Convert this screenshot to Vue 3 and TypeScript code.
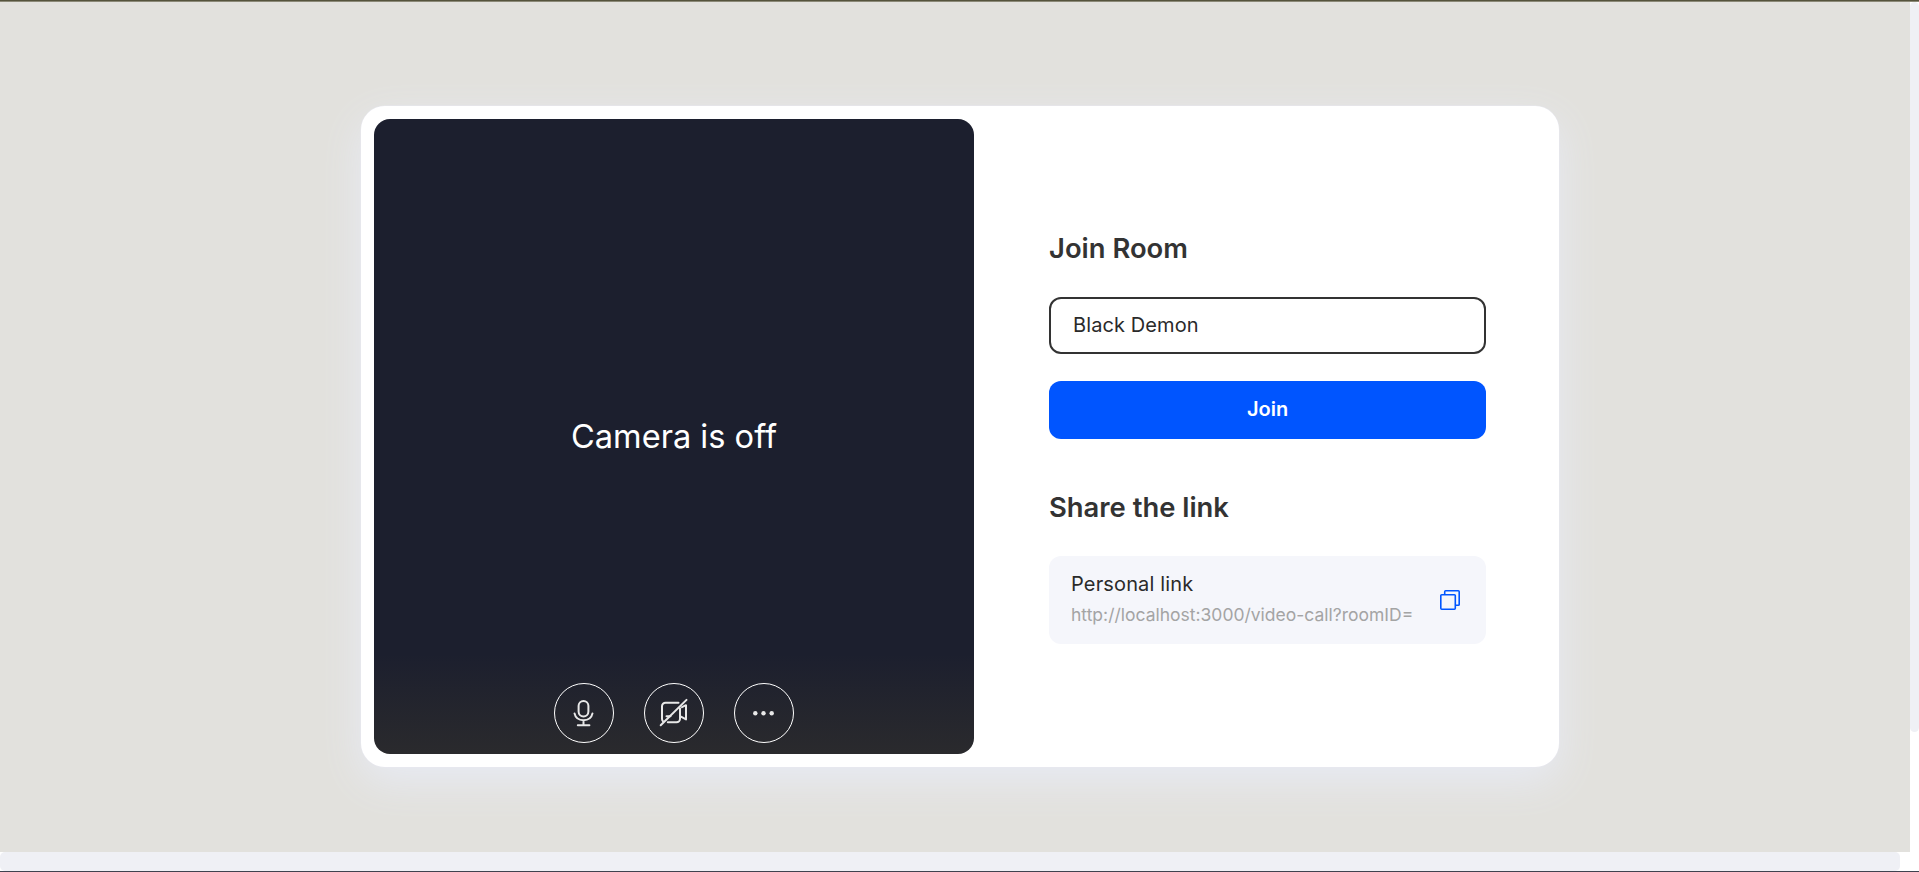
<script setup lang="ts">
import { ref } from 'vue'

const userName = ref('Black Demon')
const link = 'http://localhost:3000/video-call?roomID='
</script>

<template>
  <div class="window">
    <div class="top-line"></div>
    <div class="middle">
      <main class="page">
        <section class="card">
          <div class="preview">
            <p class="camera-text">Camera is off</p>
            <div class="controls">
              <button class="round" aria-label="Microphone">
                <svg width="30" height="30" viewBox="0 0 30 30">
                  <rect x="9.600" y="2.900" width="9.800" height="15.600" rx="4.900" />
                  <path d="M5.500 15.400c.9 4.300 4.600 6.800 9 6.800s8.100-2.500 9-6.800M14.500 22.200v5M8.800 27.200h11.600" />
                </svg>
              </button>
              <button class="round" aria-label="Camera">
                <svg width="30" height="30" viewBox="0 0 30 30">
                  <path d="M19.500 4.700H6.500A3.500 3.500 0 0 0 3 8.200v12.600a3.500 3.500 0 0 0 1 2.500M8.800 24.200h8.700a3.500 3.500 0 0 0 3.500-3.500V10.200M7.500 18.200h4M23 9.200l4-2v14.200l-5-2.800" />
                  <path d="M1.700 27.300L27.500 1.900" />
                </svg>
              </button>
              <button class="round" aria-label="More">
                <svg width="30" height="30" viewBox="0 0 30 30">
                  <g class="dots"><circle cx="6.300" cy="15.200" r="2.200" /><circle cx="14.500" cy="15.200" r="2.200" /><circle cx="22.700" cy="15.200" r="2.200" /></g>
                </svg>
              </button>
            </div>
          </div>
          <div class="form">
            <h2>Join Room</h2>
            <input v-model="userName" class="name" type="text" />
            <button class="join">Join</button>
            <h2 class="share-title">Share the link</h2>
            <div class="share">
              <div class="share-text">
                <div class="label">Personal link</div>
                <div class="url">{{ link }}</div>
              </div>
              <button class="copy" aria-label="Copy link">
                <svg width="20" height="20" viewBox="0 0 20 20">
                  <path d="M4.700 4V1.700a.9.900 0 0 1 .9-.9h12.700a.9.900 0 0 1 .9.900v12.700a.9.900 0 0 1-.9.900H16" />
                  <rect x=".8" y="4.700" width="14.500" height="14.500" rx=".9" />
                </svg>
              </button>
            </div>
          </div>
        </section>
      </main>
      <div class="vbar"><div class="vthumb"></div></div>
    </div>
    <div class="hbar"><div class="hthumb"></div></div>
    <div class="bottom-line"></div>
  </div>
</template>

<style>
body { margin: 0; overflow: hidden; }
</style>

<style scoped>
* { box-sizing: border-box; }
.window {
  display: flex;
  flex-direction: column;
  width: 1919px;
  height: 872px;
  background: #fff;
  font-family: Inter, "Liberation Sans", sans-serif;
}
.top-line { height: 2px; background: #55533c; border-bottom: 1px solid #8b8977; flex: none; }
.middle { display: flex; height: 850px; }
.page {
  width: 1910px;
  padding: 104px 0 0 361px;
  background: #e2e1dd;
}
.card {
  display: flex;
  width: 1198px;
  height: 661px;
  padding: 13px;
  border-radius: 24px;
  background: #fff;
  box-shadow: 0 0 0 .5px #e8e8ef, 0 14px 40px #e8ebf4;
}
.preview {
  display: flex;
  flex-direction: column;
  width: 600px;
  height: 635px;
  border-radius: 16px;
  background: linear-gradient(#1c1f2e 0, #1c1f2e 535px, #2a2a2d 635px);
}
.camera-text {
  margin: 296px 0 0;
  height: 42px;
  line-height: 42px;
  font-size: 32.6px;
  text-align: center;
  color: #fff;
}
.controls { display: flex; justify-content: center; gap: 30px; margin-top: 226px; }
.round {
  display: flex;
  align-items: center;
  justify-content: center;
  width: 60px;
  height: 60px;
  padding: 0;
  border: 1px solid #fff;
  border-radius: 50%;
  background: transparent;
}
svg { display: block; fill: none; stroke: #e8e8e8; stroke-width: 2; stroke-linecap: round; stroke-linejoin: round; }
.dots { fill: #e8e8e8; stroke: none; }
.form { width: 437px; margin-left: 75px; padding-top: 112px; }
h2 {
  margin: 0;
  height: 34px;
  line-height: 34px;
  font-size: 27.4px;
  font-weight: 600;
  color: #333;
}
.name {
  display: block;
  width: 437px;
  height: 57px;
  margin: 32px 0 27px;
  padding: 0 22px 1px;
  border: 2px solid #333;
  border-radius: 12px;
  outline: none;
  background: #fff;
  font: 400 20px Inter, "Liberation Sans", sans-serif;
  letter-spacing: .1px;
  color: #2a2a2a;
}
.join {
  display: block;
  width: 437px;
  height: 58px;
  padding: 0 0 2px;
  border: 0;
  border-radius: 12px;
  background: #0055ff;
  color: #fff;
  font: 600 20px Inter, "Liberation Sans", sans-serif;
}
.share-title { margin-top: 51px; }
.share {
  display: flex;
  align-items: center;
  justify-content: space-between;
  height: 88px;
  margin-top: 32px;
  padding: 0 26px 0 22px;
  border-radius: 12px;
  background: #f5f6fb;
}
.share-text { padding-bottom: 3px; }
.label { height: 28px; line-height: 28px; font-size: 20px; letter-spacing: .15px; color: #2a2a2a; }
.url { height: 24px; margin-top: 5px; line-height: 24px; font-size: 17.5px; color: #a4a4a4; }
.copy { padding: 0; border: 0; background: transparent; }
.copy svg { stroke: #0055ff; stroke-width: 1.600; }
.vbar { width: 9px; background: #fff; }
.vthumb { height: 730px; border-radius: 5px; background: #eff0f5; }
.hbar { height: 19px; background: #fff; flex: none; }
.hthumb { width: 1900px; height: 19px; border-radius: 5px; background: #eff0f5; }
.bottom-line { height: 1px; background: #3f424f; }
</style>
